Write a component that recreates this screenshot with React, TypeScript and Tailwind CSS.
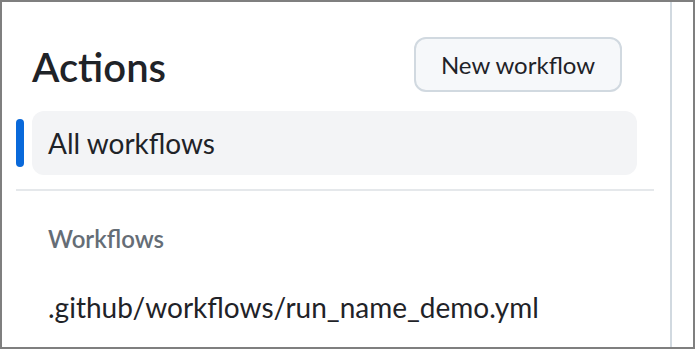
import React from "react";

const App: React.FC = () => {
  return (
    <div
      className="w-[695px] h-[349px] border-2 border-[#7f7f7f] bg-white flex overflow-hidden text-[#1f2328]"
      style={{ fontFamily: 'Lato, "Noto Sans", sans-serif' }}
    >
      {/* Sidebar */}
      <div className="w-[668px] pl-[14px] pr-[16px]">
        {/* Header */}
        <div className="mt-[35px] h-[55px] pl-[16px] pr-[32px] flex items-center justify-between">
          <h1 className="text-[40px] leading-none font-semibold pt-[4px]">Actions</h1>
          <button className="h-[55px] w-[208px] rounded-[12px] border-2 border-[#d1d9e0] bg-[#f6f8fa] text-[24px] font-normal leading-none pt-[1px]">
            New workflow
          </button>
        </div>

        {/* Nav */}
        <div className="mt-[19px] flex items-center gap-[8px]">
          <div className="w-[8px] h-[48px] rounded-full bg-[#0969da]" />
          <div className="flex-1 mr-[17px] h-[64px] rounded-[12px] bg-[#f3f4f6] px-[16px] flex items-center">
            <span className="text-[28px] leading-none">All workflows</span>
          </div>
        </div>

        <div className="mt-[14px] h-[2px] bg-[#e5e8eb]" />

        <div className="mt-[36px] pl-[32px] text-[24px] font-semibold leading-none text-[#656d76]">
          Workflows
        </div>

        <div className="mt-[42px] pl-[32px] text-[28px] leading-none">
          .github/workflows/run_name_demo.yml
        </div>
      </div>

      {/* Divider line */}
      <div className="w-[2px] h-full bg-[#d1d9e0]" />
      <div className="flex-1" />
    </div>
  );
};

export default App;
